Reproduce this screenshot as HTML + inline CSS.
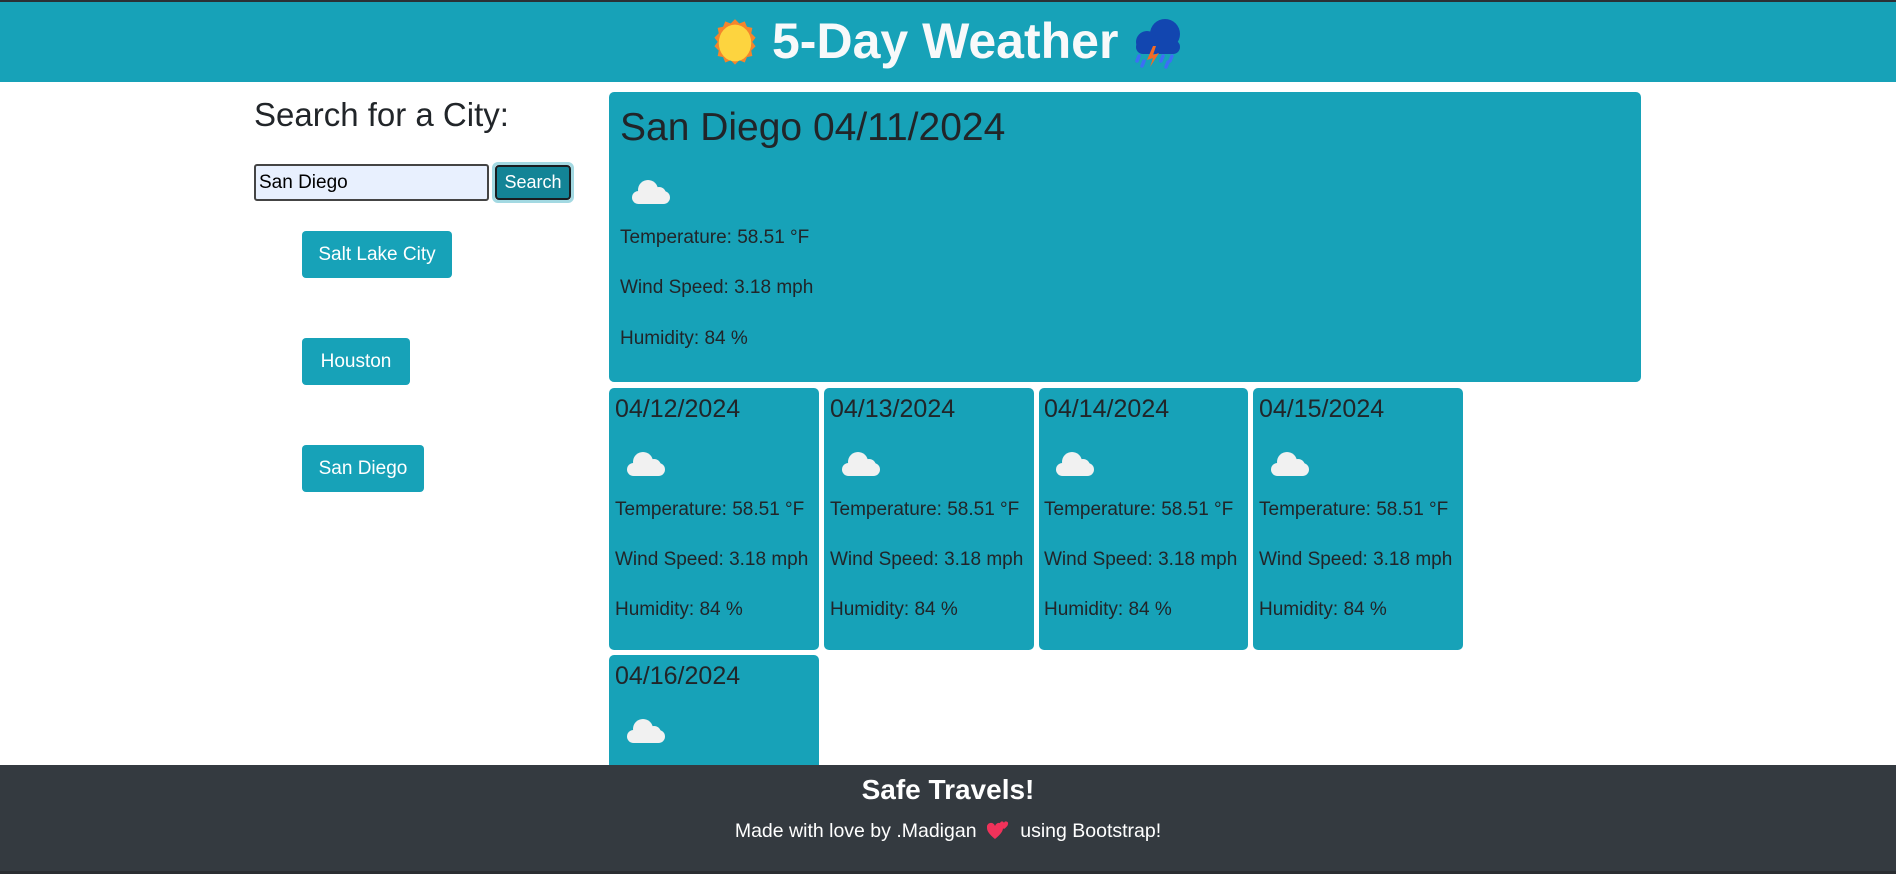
<!DOCTYPE html>
<html><head><meta charset="utf-8"><style>
*{margin:0;padding:0;box-sizing:border-box}
body{width:1896px;height:874px;position:relative;overflow:hidden;background:#fff;font-family:"Liberation Sans",sans-serif;color:#212529}
.a{position:absolute;white-space:nowrap;line-height:1.2}
.hdr{position:absolute;left:0;top:0;width:1896px;height:82px;background:#17a2b8;border-top:2px solid #2b3035}
.card{position:absolute;background:#17a2b8;border-radius:5px}
.btn{position:absolute;background:#17a2b8;color:#fff;border-radius:4px;font-size:19px;text-align:center;line-height:47px;height:47px}
.ft{position:absolute;left:0;top:765px;width:1896px;height:109px;background:#343a40;border-bottom:3px solid #2a2d31}
.s{font-size:19px}
.d{font-size:25px}
</style></head><body>
<div class="hdr"></div>
<svg class="a" style="left:710px;top:17px" width="50" height="52" viewBox="0 0 44 48"><path d="M22 2l4 4 5-2 2 5 5 1-1 5 4 4-3 4 3 4-4 4 1 5-5 1-2 5-5-2-4 4-4-4-5 2-2-5-5-1 1-5-4-4 3-4-3-4 4-4-1-5 5-1 2-5 5 2z" fill="#f4852c"/><ellipse cx="22" cy="24" rx="15" ry="17" fill="#fdd43f"/></svg>
<div class="a" style="left:772px;top:11px;font-size:50px;font-weight:bold;color:#f8f9fa">5-Day Weather</div>
<svg class="a" style="left:1131px;top:18px" width="54" height="52" viewBox="0 0 54 52"><circle cx="34" cy="16" r="15" fill="#1246b0"/><circle cx="16" cy="24" r="11" fill="#1246b0"/><rect x="5" y="22" width="44" height="14" rx="7" fill="#1246b0"/><path d="M22 28l-6 14 6-2-3 9 9-14-6 2 3-9z" fill="#f36b24"/><g stroke="#3d6ef5" stroke-width="3.5" stroke-linecap="round"><path d="M8 38l-2 5M13 43l-2 5M32 38l-2 5M41 38l-2 5M37 44l-2 5"/></g></svg>

<div class="a" style="left:254px;top:95px;font-size:33px">Search for a City:</div>
<div class="a" style="left:254px;top:164px;width:235px;height:37px;background:#e8f0fe;border:2px solid #444;border-radius:3px;font-size:19px;line-height:33px;padding-left:3px;color:#000">San Diego</div>
<div class="a" style="left:492px;top:162px;width:82px;height:41px;border:3px solid #a3d9e2;border-radius:6px;"></div>
<div class="a" style="left:495px;top:165px;width:76px;height:35px;background:#138496;border:2px solid #1a1d20;border-radius:4px;color:#fff;font-size:18px;line-height:31px;text-align:center">Search</div>
<div class="btn" style="left:302px;top:231px;width:150px">Salt Lake City</div>
<div class="btn" style="left:302px;top:338px;width:108px">Houston</div>
<div class="btn" style="left:302px;top:445px;width:122px">San Diego</div>

<div class="card" style="left:609px;top:92px;width:1032px;height:290px"></div>
<div class="a" style="left:620px;top:105px;font-size:39px">San Diego 04/11/2024</div>
<svg class="a" style="left:630px;top:178px" width="42" height="28" viewBox="0 0 42 28"><g fill="#f1f1f1"><circle cx="18" cy="12" r="10"/><circle cx="29" cy="16" r="7"/><rect x="2" y="13" width="38" height="13" rx="6.5"/></g></svg>
<div class="a s" style="left:620px;top:227px">Temperature: 58.51 °F</div>
<div class="a s" style="left:620px;top:277px">Wind Speed: 3.18 mph</div>
<div class="a s" style="left:620px;top:328px">Humidity: 84 %</div>

<div class="card" style="left:609px;top:388px;width:210px;height:262px"></div>
<div class="card" style="left:824px;top:388px;width:210px;height:262px"></div>
<div class="card" style="left:1039px;top:388px;width:209px;height:262px"></div>
<div class="card" style="left:1253px;top:388px;width:210px;height:262px"></div>
<div class="card" style="left:609px;top:655px;width:210px;height:120px"></div>

<div class="a d" style="left:615px;top:394px">04/12/2024</div>
<div class="a d" style="left:830px;top:394px">04/13/2024</div>
<div class="a d" style="left:1044px;top:394px">04/14/2024</div>
<div class="a d" style="left:1259px;top:394px">04/15/2024</div>
<div class="a d" style="left:615px;top:661px">04/16/2024</div>

<svg class="a" style="left:625px;top:450px" width="42" height="28" viewBox="0 0 42 28"><g fill="#f1f1f1"><circle cx="18" cy="12" r="10"/><circle cx="29" cy="16" r="7"/><rect x="2" y="13" width="38" height="13" rx="6.5"/></g></svg>
<svg class="a" style="left:840px;top:450px" width="42" height="28" viewBox="0 0 42 28"><g fill="#f1f1f1"><circle cx="18" cy="12" r="10"/><circle cx="29" cy="16" r="7"/><rect x="2" y="13" width="38" height="13" rx="6.5"/></g></svg>
<svg class="a" style="left:1054px;top:450px" width="42" height="28" viewBox="0 0 42 28"><g fill="#f1f1f1"><circle cx="18" cy="12" r="10"/><circle cx="29" cy="16" r="7"/><rect x="2" y="13" width="38" height="13" rx="6.5"/></g></svg>
<svg class="a" style="left:1269px;top:450px" width="42" height="28" viewBox="0 0 42 28"><g fill="#f1f1f1"><circle cx="18" cy="12" r="10"/><circle cx="29" cy="16" r="7"/><rect x="2" y="13" width="38" height="13" rx="6.5"/></g></svg>
<svg class="a" style="left:625px;top:717px" width="42" height="28" viewBox="0 0 42 28"><g fill="#f1f1f1"><circle cx="18" cy="12" r="10"/><circle cx="29" cy="16" r="7"/><rect x="2" y="13" width="38" height="13" rx="6.5"/></g></svg>

<div class="a s" style="left:615px;top:499px">Temperature: 58.51 °F</div>
<div class="a s" style="left:615px;top:549px">Wind Speed: 3.18 mph</div>
<div class="a s" style="left:615px;top:599px">Humidity: 84 %</div>
<div class="a s" style="left:830px;top:499px">Temperature: 58.51 °F</div>
<div class="a s" style="left:830px;top:549px">Wind Speed: 3.18 mph</div>
<div class="a s" style="left:830px;top:599px">Humidity: 84 %</div>
<div class="a s" style="left:1044px;top:499px">Temperature: 58.51 °F</div>
<div class="a s" style="left:1044px;top:549px">Wind Speed: 3.18 mph</div>
<div class="a s" style="left:1044px;top:599px">Humidity: 84 %</div>
<div class="a s" style="left:1259px;top:499px">Temperature: 58.51 °F</div>
<div class="a s" style="left:1259px;top:549px">Wind Speed: 3.18 mph</div>
<div class="a s" style="left:1259px;top:599px">Humidity: 84 %</div>

<div class="ft"></div>
<div class="a" style="left:0;top:773px;width:1896px;text-align:center;font-size:28px;font-weight:bold;color:#fff">Safe Travels!</div>
<div class="a" style="left:0;top:820px;width:1896px;text-align:center;font-size:19.5px;color:#fff">Made with love by .Madigan &nbsp;<svg width="22" height="20" viewBox="0 0 22 20" style="vertical-align:-3px"><path d="M8 19C2 14 0 11 0 8a4 4 0 0 1 8-2 4 4 0 0 1 8 2c0 3-2 6-8 11z" fill="#f0325a"/><path d="M17 9c-3-2-4-4-4-5a2 2 0 0 1 4-1 2 2 0 0 1 4 1c0 1-1 3-4 5z" fill="#f0325a"/></svg>&nbsp; using Bootstrap!</div>
</body></html>
